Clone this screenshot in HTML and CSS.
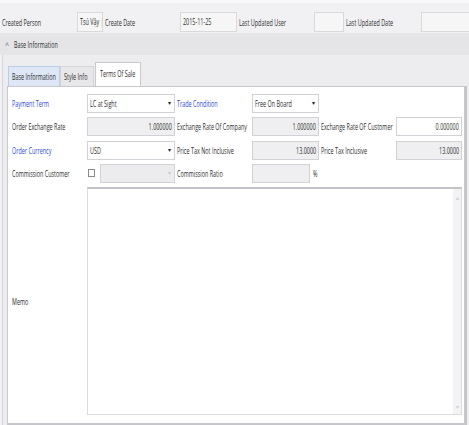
FILE: index.html
```html
<!DOCTYPE html>
<html lang="en">
<head>
    <meta charset="UTF-8">
    <title>Terms Of Sale</title>
    <link rel="stylesheet" href="styles.css">
</head>
<body>
    <div class="top-bar">
        <span class="top-label"><span class="t">Created Person</span></span>
        <span class="top-box w-person"><span class="t">Tsú Vậy |</span></span>
        <span class="top-label"><span class="t">Create Date</span></span>
        <span class="top-box w-date"><span class="t">2015-11-25</span></span>
        <span class="top-label"><span class="t">Last Updated User</span></span>
        <span class="top-box w-user"></span>
        <span class="top-label"><span class="t">Last Updated Date</span></span>
        <span class="top-box w-last"></span>
    </div>

    <div class="group-header">
        <span class="chevron">&#708;</span>
        <span class="t">Base Information</span>
    </div>

    <div class="group-body">
        <div class="tabs">
            <span class="tab tab-hover"><span class="t">Base Information</span></span>
            <span class="tab tab-style"><span class="t">Style Info</span></span>
            <span class="tab tab-active"><span class="t">Terms Of Sale</span></span>
        </div>

        <div class="panel">
            <div class="form-grid">
                <!-- row 1 -->
                <label class="lbl required"><span class="t">Payment Term</span></label>
                <div class="field select"><span class="t">LC at Sight</span><span class="arrow">&#9662;</span></div>
                <label class="lbl lbl-mid required"><span class="t">Trade Condition</span></label>
                <div class="field short select"><span class="t">Free On Board</span><span class="arrow">&#9662;</span></div>
                <span></span>
                <span></span>

                <!-- row 2 -->
                <label class="lbl"><span class="t">Order Exchange Rate</span></label>
                <div class="field readonly num"><span class="t">1.000000</span></div>
                <label class="lbl lbl-mid"><span class="t">Exchange Rate Of Company</span></label>
                <div class="field short readonly num"><span class="t">1.000000</span></div>
                <label class="lbl"><span class="t">Exchange Rate OF Customer</span></label>
                <div class="field num"><span class="t">0.000000</span></div>

                <!-- row 3 -->
                <label class="lbl required"><span class="t">Order Currency</span></label>
                <div class="field select"><span class="t">USD</span><span class="arrow">&#9662;</span></div>
                <label class="lbl lbl-mid"><span class="t">Price Tax Not Inclusive</span></label>
                <div class="field short readonly num"><span class="t">13.0000</span></div>
                <label class="lbl"><span class="t">Price Tax Inclusive</span></label>
                <div class="field readonly num"><span class="t">13.0000</span></div>

                <!-- row 4 -->
                <label class="lbl"><span class="t">Commission Customer</span></label>
                <div class="check-combo">
                    <span class="checkbox"></span>
                    <div class="field select disabled"><span class="arrow">&#9662;</span></div>
                </div>
                <label class="lbl lbl-mid"><span class="t">Commission Ratio</span></label>
                <div class="ratio">
                    <div class="field readonly ratio-box"></div>
                    <span class="pct"><span class="t">%</span></span>
                </div>
                <span></span>
                <span></span>

                <!-- memo -->
                <label class="lbl"><span class="t">Memo</span></label>
                <div class="memo">
                    <div class="memo-text"></div>
                    <div class="scrollbar">
                        <span class="sb-arrow">&#9652;</span>
                        <span class="sb-arrow">&#9662;</span>
                    </div>
                </div>
            </div>
        </div>
    </div>
</body>
</html>
```

FILE: styles.css
```css
* {
    margin: 0;
    padding: 0;
    box-sizing: border-box;
}

body {
    width: 469px;
    height: 425px;
    overflow: hidden;
    background: #f1f1f3;
    font-family: 'Open Sans', 'Liberation Sans', sans-serif;
    font-size: 9.8px;
    color: #2e2e2e;
}

/* the screen uses a very condensed face, so text is squeezed sideways */
.t {
    display: inline-block;
    white-space: nowrap;
    transform: scaleX(0.555);
    transform-origin: 0 50%;
}

/* top info bar */
.top-bar {
    display: flex;
    align-items: center;
    height: 33px;
    padding: 10px 0 2px 2px;
    white-space: nowrap;
    border-top: 3px solid #f8f8fa;
}

.top-label {
    width: 75px;
    flex: none;
}

.top-box {
    flex: none;
    height: 20px;
    line-height: 18px;
    padding-left: 2px;
    background: #f6f6f7;
    border: 1px solid #d9d9dc;
    overflow: hidden;
    margin-right: 2px;
}

.w-person { width: 26px; }
.w-date { width: 57px; }
.w-user { width: 30px; }
.w-last { width: 60px; }

/* group */
.group-header {
    height: 22px;
    background: #e5e5e8;
    display: flex;
    align-items: center;
    gap: 5px;
    padding-left: 5px;
}

.chevron {
    font-size: 7px;
    color: #777;
}

.group-body {
    margin-left: 2px;
    border-left: 1px solid #d6d6da;
    padding: 7px 2px 0 4px;
    background: #ededf0;
    height: 370px;
}

.tabs {
    display: flex;
    align-items: flex-end;
    height: 24px;
    padding-left: 1px;
}

.tab {
    height: 20px;
    line-height: 19px;
    padding-left: 3px;
    background: #e7e7e9;
    border: 1px solid #d4d4d8;
    border-bottom: none;
    overflow: hidden;
}

.tab-hover {
    background: #dde7f6;
    border-color: #bccde8;
    width: 52px;
}

.tab-style {
    width: 34px;
}

.tab-active {
    width: 46px;
    height: 24px;
    line-height: 22px;
    background: #fff;
    border-color: #c9c9cd;
    margin-left: 1px;
    padding-left: 4px;
}

.panel {
    background: #fff;
    border: 1px solid #c9c9cd;
    border-right: 3px solid #c6c6ca;
    border-bottom: 2px solid #c6c6ca;
    height: 339px;
    padding: 7px 0 0 4px;
}

/* form */
.form-grid {
    display: grid;
    grid-template-columns: 75px 88px 77px 69px 75px 66px;
    grid-template-rows: 19px 19px 19px 19px 228px;
    row-gap: 4.3px;
}

.lbl {
    display: flex;
    align-items: center;
    white-space: nowrap;
}

.lbl-mid {
    padding-left: 2px;
}

.required {
    color: #2b4bd6;
}

.field {
    position: relative;
    height: 19px;
    line-height: 17px;
    border: 1px solid #d2d2d6;
    background: #fff;
    padding: 0 3px 0 2px;
    white-space: nowrap;
    overflow: hidden;
}

.short {
    width: 67px;
}

.readonly {
    background: #efeff1;
}

.num {
    text-align: right;
    padding-right: 2px;
}

.num .t {
    transform-origin: 100% 50%;
}

.select .arrow {
    position: absolute;
    right: 3px;
    top: 0;
    font-size: 6px;
    color: #222;
}

.disabled {
    background: #ececee;
    flex: 1;
}

.disabled .arrow {
    color: #c8c8cc;
}

.check-combo {
    display: flex;
    align-items: center;
    gap: 4px;
    padding-left: 1px;
}

.checkbox {
    width: 7px;
    height: 8px;
    border: 1px solid #8a8a8e;
    background: #fff;
    margin-right: 1px;
}

.ratio {
    display: flex;
    align-items: center;
    gap: 3px;
}

.ratio-box {
    width: 60px;
}

.pct {
    line-height: 19px;
}

/* memo */
.memo {
    grid-column: 2 / 7;
    display: flex;
    border: 1px solid #dcdcdf;
    border-top: 2px solid #c4c4c8;
}

.memo-text {
    flex: 1;
    background: #fff;
}

.scrollbar {
    width: 8px;
    background: #f3f3f5;
    display: flex;
    flex-direction: column;
    justify-content: space-between;
    align-items: center;
    padding: 6px 0 4px;
}

.sb-arrow {
    font-size: 6px;
    color: #d0d0d4;
    line-height: 6px;
}
```
